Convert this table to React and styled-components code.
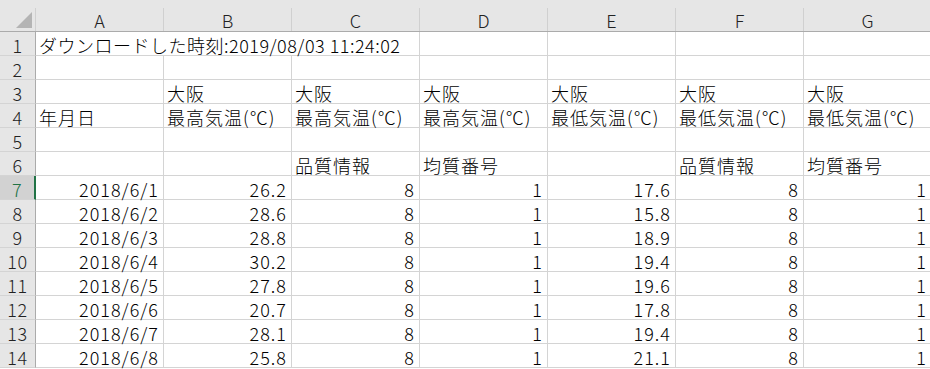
import React from 'react';
import styled, { createGlobalStyle } from 'styled-components';

const GlobalStyle = createGlobalStyle`
  html, body {
    margin: 0;
    padding: 0;
    background: #ffffff;
    overflow: hidden;
  }
  body {
    font-family: "Noto Sans CJK JP", "Noto Sans", sans-serif;
    font-weight: 300;
  }
`;

const COLS = ['A', 'B', 'C', 'D', 'E', 'F', 'G'];

const Sheet = styled.div`
  display: grid;
  grid-template-columns: 36px repeat(7, 128px);
  grid-template-rows: 32px;
  grid-auto-rows: 24px;
  width: 930px;
  height: 369px;
  overflow: hidden;
  font-size: 18px;
  color: #000;
`;

const Corner = styled.div`
  background: #e6e6e6;
  border-bottom: 1px solid #ababab;
  padding-top: 8px;
  box-sizing: border-box;
`;

const CornerInner = styled.div`
  height: 100%;
  border-right: 1px solid #d0d0d0;
  display: flex;
  align-items: flex-end;
  justify-content: flex-end;
  padding: 0 3px 3px 0;
  box-sizing: border-box;
`;

const ColHeader = styled.div`
  background: #e6e6e6;
  border-bottom: 1px solid #ababab;
  padding-top: 8px;
  box-sizing: border-box;
`;

const ColLabel = styled.div`
  height: 100%;
  border-right: 1px solid #d0d0d0;
  display: flex;
  align-items: center;
  justify-content: center;
  line-height: 20px;
  color: #222;
`;

const RowHeader = styled.div`
  background: ${p => (p.$active ? '#d2d2d2' : '#e6e6e6')};
  color: ${p => (p.$active ? '#217346' : '#222')};
  border-bottom: 1px solid #d4d4d4;
  border-right: ${p => (p.$active ? '2px solid #217346' : '1px solid #ababab')};
  box-sizing: border-box;
  display: flex;
  align-items: flex-end;
  justify-content: center;
  line-height: 20px;
  letter-spacing: 0.5px;
`;

const Cell = styled.div`
  grid-column: span ${p => p.$span || 1};
  border-right: 1px solid #d4d4d4;
  border-bottom: 1px solid #d4d4d4;
  box-sizing: border-box;
  display: flex;
  align-items: flex-end;
  justify-content: ${p => (p.$num ? 'flex-end' : 'flex-start')};
  padding: ${p => (p.$num ? '0 4px 0 3px' : '0 3px 0 3px')};
  line-height: 20px;
  letter-spacing: ${p => p.$spacing || '1px'};
  white-space: nowrap;
`;

const data = [
  ['2018/6/1', '26.2', '17.6'],
  ['2018/6/2', '28.6', '15.8'],
  ['2018/6/3', '28.8', '18.9'],
  ['2018/6/4', '30.2', '19.4'],
  ['2018/6/5', '27.8', '19.6'],
  ['2018/6/6', '20.7', '17.8'],
  ['2018/6/7', '28.1', '19.4'],
  ['2018/6/8', '25.8', '21.1'],
];

const textRows = [
  [],
  ['', '大阪', '大阪', '大阪', '大阪', '大阪', '大阪'],
  ['年月日', '最高気温(℃)', '最高気温(℃)', '最高気温(℃)', '最低気温(℃)', '最低気温(℃)', '最低気温(℃)'],
  [],
  ['', '', '品質情報', '均質番号', '', '品質情報', '均質番号'],
];

const TextRow = ({ n, values }) => (
  <>
    <RowHeader>{n}</RowHeader>
    {COLS.map((c, i) => (
      <Cell key={c}>{values[i] || ''}</Cell>
    ))}
  </>
);

const DataRow = ({ n, row, active }) => {
  const [date, hi, lo] = row;
  return (
    <>
      <RowHeader $active={active}>{n}</RowHeader>
      <Cell $num>{date}</Cell>
      <Cell $num>{hi}</Cell>
      <Cell $num>8</Cell>
      <Cell $num>1</Cell>
      <Cell $num>{lo}</Cell>
      <Cell $num>8</Cell>
      <Cell $num>1</Cell>
    </>
  );
};

const App = () => (
  <>
    <GlobalStyle />
    <Sheet>
      <Corner>
        <CornerInner>
          <svg width="16" height="16" viewBox="0 0 16 16">
            <polygon points="16,0 16,16 0,16" fill="#b4b4b4" />
          </svg>
        </CornerInner>
      </Corner>
      {COLS.map(c => (
        <ColHeader key={c}>
          <ColLabel>{c}</ColLabel>
        </ColHeader>
      ))}

      <RowHeader>1</RowHeader>
      <Cell $span={3} $spacing="0.5px">ダウンロードした時刻:2019/08/03 11:24:02</Cell>
      <Cell />
      <Cell />
      <Cell />
      <Cell />

      {textRows.map((values, i) => (
        <TextRow key={i} n={i + 2} values={values} />
      ))}

      {data.map((row, i) => (
        <DataRow key={i} n={i + 7} row={row} active={i === 0} />
      ))}
    </Sheet>
  </>
);

export default App;
